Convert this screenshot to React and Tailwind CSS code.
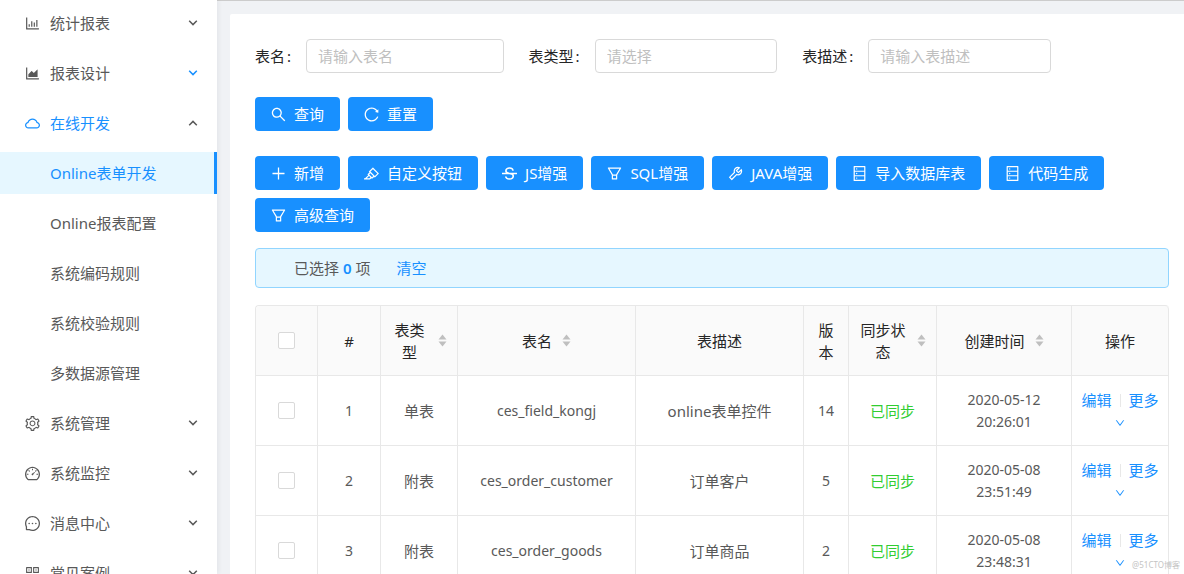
import React from 'react';
import {
  AiOutlineAreaChart,
  AiOutlineBarChart,
  AiOutlineCloud,
  AiOutlineDashboard,
  AiOutlineDatabase,
  AiOutlineDown,
  AiOutlineFilter,
  AiOutlineHighlight,
  AiOutlineMessage,
  AiOutlinePlus,
  AiOutlineQrcode,
  AiOutlineReload,
  AiOutlineSearch,
  AiOutlineSetting,
  AiOutlineStrikethrough,
  AiOutlineTool,
} from 'react-icons/ai';

const menus = [
  { title: '统计报表', icon: AiOutlineBarChart },
  { title: '报表设计', icon: AiOutlineAreaChart, hover: true },
  {
    title: '在线开发',
    icon: AiOutlineCloud,
    open: true,
    children: ['Online表单开发', 'Online报表配置', '系统编码规则', '系统校验规则', '多数据源管理'],
  },
  { title: '系统管理', icon: AiOutlineSetting },
  { title: '系统监控', icon: AiOutlineDashboard },
  { title: '消息中心', icon: AiOutlineMessage },
  { title: '常见案例', icon: AiOutlineQrcode },
];

const actions = [
  { title: '新增', icon: AiOutlinePlus },
  { title: '自定义按钮', icon: AiOutlineHighlight },
  { title: 'JS增强', icon: AiOutlineStrikethrough },
  { title: 'SQL增强', icon: AiOutlineFilter },
  { title: 'JAVA增强', icon: AiOutlineTool },
  { title: '导入数据库表', icon: AiOutlineDatabase },
  { title: '代码生成', icon: AiOutlineDatabase },
  { title: '高级查询', icon: AiOutlineFilter },
];

const columns = [
  { title: '#', width: 'w-[63px]' },
  { title: '表类型', width: 'w-[77px]', sorter: true },
  { title: '表名', width: 'w-[178px]', sorter: true },
  { title: '表描述', width: 'w-[168px]' },
  { title: '版本', width: 'w-[45px]' },
  { title: '同步状态', width: 'w-[88px]', sorter: true },
  { title: '创建时间', width: 'w-[135px]', sorter: true },
  { title: '操作', width: 'w-[97px]' },
];

const rows = [
  { type: '单表', name: 'ces_field_kongj', desc: 'online表单控件', version: 14, time: '2020-05-12 20:26:01' },
  { type: '附表', name: 'ces_order_customer', desc: '订单客户', version: 5, time: '2020-05-08 23:51:49' },
  { type: '附表', name: 'ces_order_goods', desc: '订单商品', version: 2, time: '2020-05-08 23:48:31' },
];

const fieldClass =
  'h-[34px] w-full min-w-0 flex-1 appearance-none rounded border border-[#d9d9d9] bg-white px-[11px] text-[#bfbfbf] placeholder:text-[#bfbfbf] focus:border-[#1890ff] focus:outline-none';

const headClass = 'h-[70px] border-b border-r border-[#e8e8e8] px-2.5 py-0 font-normal';
const cellClass = 'h-[70px] border-b border-r border-[#e8e8e8] px-2 py-0';

// the glyphs keep a 64 unit margin inside 1024, crop it so they fill their box
const iconBox = '64 64 896 896';

const Arrow = ({ up }) => (
  <svg viewBox="0 0 10 6" className="h-[6px] w-[10px]" fill="none" stroke="currentColor" strokeWidth="1.5">
    <path d={up ? 'M1.2 5.2 5 1.4l3.8 3.8' : 'M1.2.8 5 4.6 8.8.8'} />
  </svg>
);

const SortIcon = () => (
  <svg viewBox="0 0 9 13" className="h-[13px] w-[9px] shrink-0 fill-[#bfbfbf]">
    <path d="M4.5.5 8.5 5.5H.5zM4.5 12.5.5 7.5h8z" />
  </svg>
);

const Checkbox = ({ label }) => (
  <input
    type="checkbox"
    aria-label={label}
    className="mx-auto block size-[17px] appearance-none rounded-xs border border-[#d9d9d9] bg-white checked:border-[#1890ff] checked:bg-[#1890ff]"
  />
);

const Button = ({ icon: Icon, children }) => (
  <button
    type="button"
    className="flex h-[34px] items-center gap-2 rounded bg-[#1890ff] px-4 whitespace-nowrap text-white hover:bg-[#40a9ff]"
  >
    <Icon viewBox={iconBox} className="size-[15px]" />
    <span>{children}</span>
  </button>
);

const Field = ({ id, label, children }) => (
  <div className="flex items-center">
    <label htmlFor={id} className="mr-[15px] whitespace-nowrap text-[#262626]">
      {label}
      <span className="ml-[2px]">:</span>
    </label>
    {children}
  </div>
);

const SideMenu = () => (
  <nav className="z-10 flex w-[217px] shrink-0 flex-col gap-2 bg-white pt-[2px] shadow-[2px_0_4px_rgba(0,21,41,0.05)]">
    {menus.map(({ title, icon: Icon, hover, open, children }) => (
      <React.Fragment key={title}>
        <button
          type="button"
          aria-expanded={!!open}
          className={`flex h-[42px] shrink-0 items-center gap-2.5 pr-[19px] pl-[25px] ${open ? 'text-[#1890ff]' : ''}`}
        >
          <Icon viewBox={iconBox} className="size-[15px]" />
          <span className="flex-1 text-left">{title}</span>
          <span className={hover ? 'text-[#1890ff]' : 'text-[#595959]'}>
            <Arrow up={open} />
          </span>
        </button>
        {children?.map((child, i) => (
          <a
            key={child}
            href="#"
            className={`flex h-[42px] shrink-0 items-center pl-[50px] ${
              i === 0 ? 'border-r-3 border-[#1890ff] bg-[#e6f7ff] text-[#1890ff]' : ''
            }`}
          >
            {child}
          </a>
        ))}
      </React.Fragment>
    ))}
  </nav>
);

const SearchForm = () => (
  <form>
    <div className="grid grid-cols-[minmax(0,248fr)_minmax(0,248fr)_minmax(0,248fr)_minmax(0,93fr)] gap-x-[25px]">
      <Field id="table-name" label="表名">
        <input id="table-name" type="text" placeholder="请输入表名" className={fieldClass} />
      </Field>
      <Field id="table-type" label="表类型">
        <select id="table-type" defaultValue="" className={fieldClass}>
          <option value="">请选择</option>
          <option value="1">单表</option>
          <option value="2">主表</option>
          <option value="3">附表</option>
        </select>
      </Field>
      <Field id="table-desc" label="表描述">
        <input id="table-desc" type="text" placeholder="请输入表描述" className={fieldClass} />
      </Field>
    </div>
    <div className="mt-6 flex gap-2">
      <Button icon={AiOutlineSearch}>查询</Button>
      <Button icon={AiOutlineReload}>重置</Button>
    </div>
  </form>
);

const FormTable = () => (
  <table className="mt-[17px] w-full table-fixed border-separate border-spacing-0 rounded-t border-t border-l border-[#e8e8e8] text-center">
    <thead className="bg-[#fafafa] text-[#262626]">
      <tr>
        <th className={`${headClass} w-[62px] rounded-tl`}>
          <Checkbox label="全选" />
        </th>
        {columns.map(({ title, width, sorter }) => (
          <th key={title} className={`${headClass} ${width} last:rounded-tr`}>
            {sorter ? (
              <div className="flex items-center justify-center gap-2.5">
                <span>{title}</span>
                <SortIcon />
              </div>
            ) : (
              title
            )}
          </th>
        ))}
      </tr>
    </thead>
    <tbody>
      {rows.map((row, i) => (
        <tr key={row.name}>
          <td className={cellClass}>
            <Checkbox label={row.name} />
          </td>
          <td className={`${cellClass} text-sm/[22px]`}>{i + 1}</td>
          <td className={cellClass}>{row.type}</td>
          <td className={`${cellClass} text-sm/[22px]`}>{row.name}</td>
          <td className={cellClass}>{row.desc}</td>
          <td className={`${cellClass} text-sm/[22px]`}>{row.version}</td>
          <td className={`${cellClass} text-[#32cd32]`}>已同步</td>
          <td className={`${cellClass} text-sm/[22px]`}>
            {row.time.split(' ').map((part) => (
              <div key={part}>{part}</div>
            ))}
          </td>
          <td className={`${cellClass} text-[#1890ff]`}>
            <a href="#">编辑</a>
            <span className="mx-2 inline-block h-[13px] w-px bg-[#e8e8e8] align-[-1px]" />
            <a href="#">
              更多 <AiOutlineDown viewBox={iconBox} className="inline size-[10px] align-baseline" />
            </a>
          </td>
        </tr>
      ))}
    </tbody>
  </table>
);

export default function App() {
  return (
    <div className="relative flex h-screen overflow-hidden bg-[#f0f2f5] font-['Noto_Sans','Noto_Sans_CJK_SC',sans-serif] text-[15px] leading-[22px] text-[#595959]">
      <SideMenu />
      <main className="min-w-0 flex-1 border-t border-[#cccccc] pt-[13px] pl-[13px]">
        <div className="min-h-full rounded-tl-xs bg-white pt-[25px] pr-[15px] pl-[25px]">
          <SearchForm />
          <div className="mt-[25px] flex flex-wrap gap-2">
            {actions.map(({ title, icon }) => (
              <Button key={title} icon={icon}>
                {title}
              </Button>
            ))}
          </div>
          <div className="mt-4 flex h-[40px] items-center rounded border border-[#91d5ff] bg-[#e6f7ff] pl-[38px]">
            <span>
              已选择 <b className="font-semibold text-[#1890ff]">0</b> 项
            </span>
            <a href="#" className="ml-[26px] text-[#1890ff]">
              清空
            </a>
          </div>
          <FormTable />
        </div>
      </main>
      <span className="absolute right-1 bottom-0 text-[8px] leading-[18px] text-[#c4c4c4]">@51CTO博客</span>
    </div>
  );
}
